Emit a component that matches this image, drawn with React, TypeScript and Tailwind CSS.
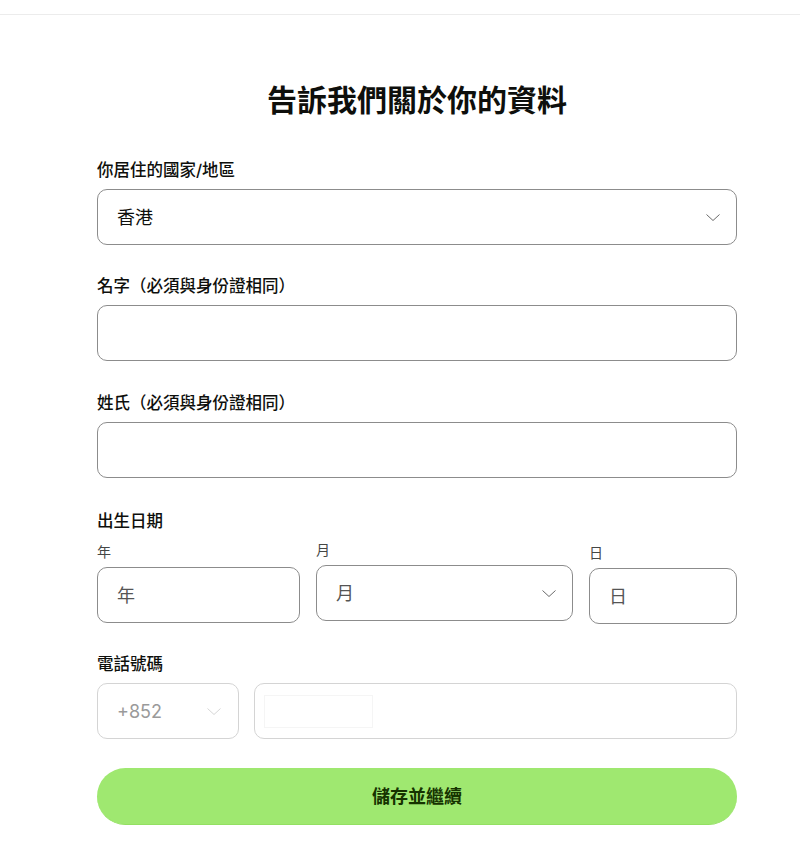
import React from "react";

const font = { fontFamily: 'Inter, "Noto Sans CJK TC", sans-serif' };

function Chevron({ color = "#6a6a6a" }: { color?: string }) {
  return (
    <svg width="14" height="7" viewBox="0 0 14 7" fill="none">
      <path d="M0.5 0.5 L7 6.5 L13.5 0.5" stroke={color} strokeWidth="1" />
    </svg>
  );
}

function Label({ children }: { children: React.ReactNode }) {
  return (
    <div className="text-[16.5px] leading-6 font-medium text-[#0e0f0c] mb-[7px]">
      {children}
    </div>
  );
}

function Box({ children, className = "" }: { children?: React.ReactNode; className?: string }) {
  return (
    <div
      className={`h-[56px] rounded-[10px] border border-[#8c8c8c] flex items-center px-[19px] text-[18px] ${className}`}
    >
      {children}
    </div>
  );
}

export default function App() {
  return (
    <div className="min-h-[860px] bg-white" style={font}>
      {/* top bar */}
      <div className="h-[15px] border-b border-[#ececec]" />

      <div className="w-[640px] ml-[97px]">
        <h1 className="mt-[67px] text-center text-[30px] leading-9 font-semibold text-[#0e0f0c]">
          告訴我們關於你的資料
        </h1>

        <div className="mt-[40px]">
          <Label>你居住的國家/地區</Label>
          <Box className="justify-between pr-[16px] text-[#0e0f0c]">
            <span>香港</span>
            <Chevron />
          </Box>
        </div>

        <div className="mt-[29px]">
          <Label>名字（必須與身份證相同）</Label>
          <Box />
        </div>

        <div className="mt-[30px]">
          <Label>姓氏（必須與身份證相同）</Label>
          <Box />
        </div>

        {/* date of birth */}
        <div className="mt-[31px]">
          <div className="text-[16.5px] leading-6 font-medium text-[#0e0f0c]">出生日期</div>
          <div className="mt-[7px] flex items-start gap-4 text-[#454745]">
            <div className="w-[203px] pt-[2px]">
              <div className="text-[14px] leading-5 mb-[5px]">年</div>
              <Box className="text-[#555]">年</Box>
            </div>
            <div className="w-[257px]">
              <div className="text-[14px] leading-5 mb-[5px]">月</div>
              <Box className="h-[55px] justify-between pr-[16px] text-[#555]">
                <span>月</span>
                <Chevron />
              </Box>
            </div>
            <div className="w-[148px] pt-[3px]">
              <div className="text-[14px] leading-5 mb-[5px]">日</div>
              <Box className="h-[55px] text-[#555]">日</Box>
            </div>
          </div>
        </div>

        {/* phone */}
        <div className="mt-[28px]">
          <Label>電話號碼</Label>
          <div className="flex gap-[15px]">
            <div className="w-[142px] h-[56px] rounded-[10px] border border-[#d4d4d4] flex items-center justify-between pl-[19px] pr-[17px] text-[18px] text-[#9a9a9a]">
              <span>+852</span>
              <Chevron color="#d6d6d6" />
            </div>
            <div className="flex-1 h-[56px] rounded-[10px] border border-[#d4d4d4] flex items-center pl-[9px]">
              <div className="w-[109px] h-[33px] border border-[#f5f5f5]" />
            </div>
          </div>
        </div>

        <button className="mt-[29px] w-full h-[57px] rounded-full bg-[#9fe870] border-b border-[#93e062] text-[18px] font-semibold text-[#163300]">
          儲存並繼續
        </button>
      </div>
    </div>
  );
}
